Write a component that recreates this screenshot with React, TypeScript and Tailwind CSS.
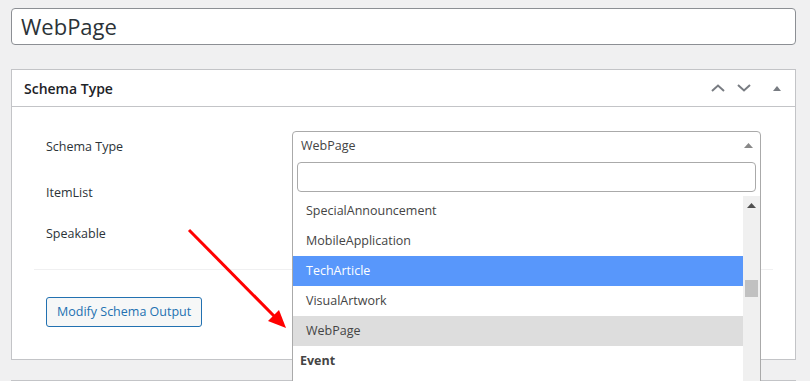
import React from "react";

const options = [
  { label: "SpecialAnnouncement", state: "" },
  { label: "MobileApplication", state: "" },
  { label: "TechArticle", state: "active" },
  { label: "VisualArtwork", state: "" },
  { label: "WebPage", state: "selected" },
];

const SchemaDropdown: React.FC = () => {
  return (
    <div className="relative w-[469px]">
      {/* closed select box */}
      <div className="h-[28px] border border-[#aaa] rounded-t-[4px] bg-white flex items-center pl-[8px] pr-[8px] pt-[2px] text-[12.5px] text-[#444]">
        <span className="flex-1">WebPage</span>
        <svg width="9" height="5" viewBox="0 0 9 5" className="mr-[-1px] mb-[2px]">
          <polygon points="0,5 4.5,0 9,5" fill="#888" />
        </svg>
      </div>

      {/* open list */}
      <div className="absolute left-0 top-[27px] w-full h-[230px] bg-white border-x border-[#aaa] z-10">
        <div className="px-[4px] pt-[4px] pb-[4px]">
          <div className="h-[30px] border border-[#aaa] rounded-[4px]"></div>
        </div>
        <div className="flex h-[200px] overflow-hidden">
          <div className="flex-1 overflow-hidden">
            {options.map((o) => (
              <div
                key={o.label}
                className={`h-[30px] flex items-center pl-[13px] text-[12.5px] ${
                  o.state === "active"
                    ? "bg-[#5897fb] text-white"
                    : o.state === "selected"
                    ? "bg-[#ddd] text-[#444]"
                    : "text-[#444]"
                }`}
              >
                {o.label}
              </div>
            ))}
            <div className="h-[30px] flex items-center pl-[7px] text-[12.5px] font-bold text-[#444]">Event</div>
          </div>
          {/* scrollbar */}
          <div className="w-[17px] bg-[#f0f0f0] flex flex-col items-center">
            <svg width="9" height="5" viewBox="0 0 9 5" className="mt-[7px]">
              <polygon points="0,5 4.5,0 9,5" fill="#505050" />
            </svg>
            <div className="w-[13px] h-[17px] bg-[#c1c1c1] mt-[72px]"></div>
          </div>
        </div>
      </div>
    </div>
  );
};

export default function App() {
  return (
    <div
      className="relative w-[810px] h-[381px] overflow-hidden bg-[#f0f0f1] pt-[8px]"
      style={{ fontFamily: '"Open Sans", "Noto Sans", sans-serif' }}
    >
      <div className="ml-[11px] w-[785px]">
        {/* title input */}
        <div className="h-[37px] bg-white border border-[#8c8f94] rounded-[4px] flex items-center pl-[9px] text-[22px] text-[#2c3338]">
          WebPage
        </div>

        {/* Schema Type panel */}
        <div className="mt-[24px] bg-white border border-[#c3c4c7]">
          <div className="h-[37px] border-b border-[#c3c4c7] flex items-center pl-[12px] pr-[14px]">
            <h2 className="flex-1 text-[14px] font-semibold text-[#1d2327]">Schema Type</h2>
            <div className="flex items-center">
              <svg width="14" height="8" viewBox="0 0 14 8" className="mr-[12px]">
                <polyline points="1,7 7,1.5 13,7" fill="none" stroke="#787c82" strokeWidth="2" />
              </svg>
              <svg width="14" height="8" viewBox="0 0 14 8" className="mr-[22px]">
                <polyline points="1,1 7,6.5 13,1" fill="none" stroke="#787c82" strokeWidth="2" />
              </svg>
              <svg width="8" height="5" viewBox="0 0 8 5">
                <polygon points="0,5 4,0 8,5" fill="#787c82" />
              </svg>
            </div>
          </div>

          <div className="px-[22px] pt-[24px] pb-[32px] text-[12.5px] text-[#2c3338]">
            <div className="flex items-start pl-[12px]">
              <div className="w-[246px] h-[28px] flex items-center pt-[5px]">Schema Type</div>
              <SchemaDropdown />
            </div>
            <div className="pl-[12px] h-[30px] mt-[19px] flex items-center">ItemList</div>
            <div className="pl-[12px] h-[30px] mt-[11px] flex items-center">Speakable</div>
            <div className="mt-[20px] border-t border-[#f0f0f1]"></div>
            <div className="mt-[27px] pl-[12px]">
              <button className="h-[30px] px-[10px] border border-[#2271b1] rounded-[3px] bg-[#f6f7f7] text-[#2271b1] text-[12.5px]">
                Modify Schema Output
              </button>
            </div>
          </div>
        </div>

        {/* next panel */}
        <div className="mt-[20px] h-[20px] bg-white border-t border-[#c3c4c7] border-x"></div>
      </div>

      {/* annotation arrow */}
      <svg className="absolute left-0 top-0 pointer-events-none z-20" width="810" height="381">
        <line x1="189" y1="230" x2="276" y2="318" stroke="#ff0000" strokeWidth="3" />
        <polygon points="286,328 268,321 279,310" fill="#ff0000" />
      </svg>
    </div>
  );
}
